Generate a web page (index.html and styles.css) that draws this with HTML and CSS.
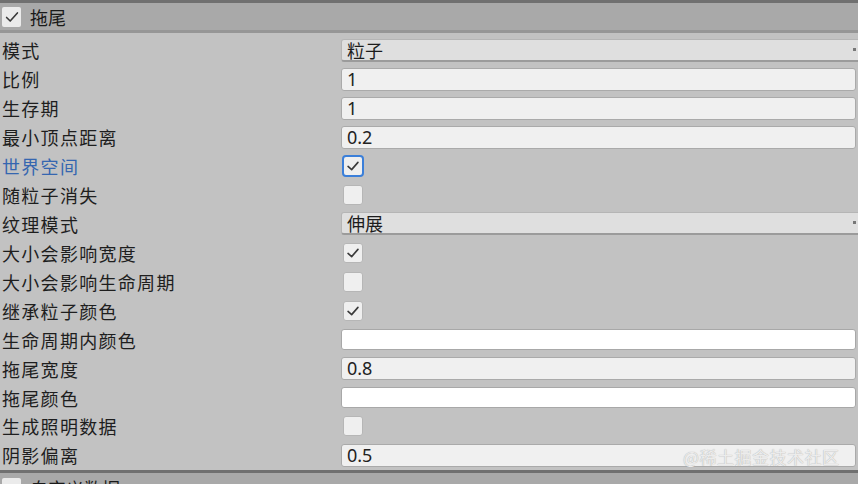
FILE: index.html
```html
<!DOCTYPE html>
<html lang="zh">
<head>
<meta charset="utf-8">
<link rel="stylesheet" href="styles.css">
</head>
<body>
<div class="panel">
  <div class="section-head">
    <span class="hcheck checked"><svg viewBox="0 0 20 20"><path d="M4 10.5 L8 14.5 L16 5.5" /></svg></span>
    <span class="htitle">拖尾</span>
  </div>
  <div class="rows">
    <div class="row"><span class="label">模式</span><div class="field drop">粒子<span class="arrow"></span></div></div>
    <div class="row"><span class="label">比例</span><div class="field text">1</div></div>
    <div class="row"><span class="label">生存期</span><div class="field text">1</div></div>
    <div class="row"><span class="label">最小顶点距离</span><div class="field text">0.2</div></div>
    <div class="row"><span class="label focus">世界空间</span><div class="cbwrap"><span class="cb focused"><svg viewBox="0 0 20 20"><path d="M4.5 10.5 L8.5 14 L15.5 6" /></svg></span></div></div>
    <div class="row"><span class="label">随粒子消失</span><div class="cbwrap"><span class="cb"></span></div></div>
    <div class="row"><span class="label">纹理模式</span><div class="field drop">伸展<span class="arrow"></span></div></div>
    <div class="row"><span class="label">大小会影响宽度</span><div class="cbwrap"><span class="cb"><svg viewBox="0 0 20 20"><path d="M4.5 10.5 L8.5 14 L15.5 6" /></svg></span></div></div>
    <div class="row"><span class="label">大小会影响生命周期</span><div class="cbwrap"><span class="cb"></span></div></div>
    <div class="row"><span class="label">继承粒子颜色</span><div class="cbwrap"><span class="cb"><svg viewBox="0 0 20 20"><path d="M4.5 10.5 L8.5 14 L15.5 6" /></svg></span></div></div>
    <div class="row"><span class="label">生命周期内颜色</span><div class="field color"></div></div>
    <div class="row"><span class="label">拖尾宽度</span><div class="field text">0.8</div></div>
    <div class="row"><span class="label">拖尾颜色</span><div class="field color"></div></div>
    <div class="row"><span class="label">生成照明数据</span><div class="cbwrap"><span class="cb"></span></div></div>
    <div class="row"><span class="label">阴影偏离</span><div class="field text">0.5</div></div>
  </div>
  <div class="section-head bottom">
    <span class="hcheck"></span>
    <span class="htitle">自定义数据</span>
  </div>
  <div class="watermark">@稀土掘金技术社区</div>
</div>
</body>
</html>
```
FILE: styles.css
```css
html, body {
  margin: 0;
  padding: 0;
  width: 858px;
  height: 484px;
  overflow: hidden;
  background: #c2c2c2;
}
.panel {
  position: relative;
  width: 858px;
  height: 484px;
  overflow: hidden;
  font-family: "Noto Sans CJK SC", "Noto Sans", sans-serif;
  color: #1c1c1c;
}
.section-head {
  display: flex;
  align-items: center;
  height: 27px;
  background: #a9a9a9;
  border-top: 3px solid #707070;
  border-bottom: 3px solid #969696;
  padding-left: 2px;
  gap: 9px;
}
.section-head.bottom {
  border-bottom: none;
  height: 30px;
  align-items: flex-start;
  padding-top: 5px;
}
.hcheck {
  width: 19px;
  height: 20px;
  background: #ebebeb;
  border-radius: 2px;
  display: flex;
  align-items: center;
  justify-content: center;
}
.hcheck svg, .cb svg {
  width: 18px;
  height: 18px;
  fill: none;
  stroke: #3a3a3a;
  stroke-width: 1.8;
  stroke-linecap: round;
  stroke-linejoin: round;
}
.htitle {
  font-size: 18px;
  line-height: 20px;
  color: #1a1a1a;
}
.rows {
  padding-top: 3px;
}
.row {
  display: grid;
  grid-template-columns: 341px 1fr;
  align-items: center;
  height: 28.93px;
}
.label {
  padding-left: 2px;
  font-size: 18px;
  line-height: 20px;
  letter-spacing: 1.3px;
  white-space: nowrap;
  color: #1e1e1e;
}
.label.focus {
  color: #3566b0;
}
.field {
  height: 23px;
  box-sizing: border-box;
  border-radius: 3px;
  font-size: 18px;
  line-height: 21px;
  padding-left: 5px;
  margin-right: 2px;
  position: relative;
}
.field.drop {
  background: #dfdfdf;
  border: 1px solid #b5b5b5;
  border-bottom: 2px solid #9b9b9b;
  margin-right: -4px;
}
.field.text {
  background: #f0f0f0;
  border: 1px solid #aaaaaa;
  font-family: "Noto Sans", "Open Sans", sans-serif;
  color: #222;
}
.field.color {
  background: #ffffff;
  border: 1px solid #a8a8a8;
  height: 21px;
}
.arrow {
  position: absolute;
  right: 5px;
  top: 8px;
  width: 3px;
  height: 3px;
  background: #777;
}
.cbwrap {
  display: flex;
  align-items: center;
  padding-left: 2px;
}
.cb {
  width: 20px;
  height: 20px;
  box-sizing: border-box;
  background: #efefef;
  border: 1px solid #b6b6b6;
  border-radius: 3px;
  display: flex;
  align-items: center;
  justify-content: center;
}
.cb.focused {
  border: 2px solid #3b7fd9;
  border-radius: 4px;
  width: 22px;
  height: 22px;
  margin-left: -1px;
}
.watermark {
  position: absolute;
  left: 683px;
  top: 446px;
  font-size: 17px;
  line-height: 22px;
  color: #ececec;
  letter-spacing: 0.5px;
  text-shadow: 0 0 1px #a0a0a0;
}
```
